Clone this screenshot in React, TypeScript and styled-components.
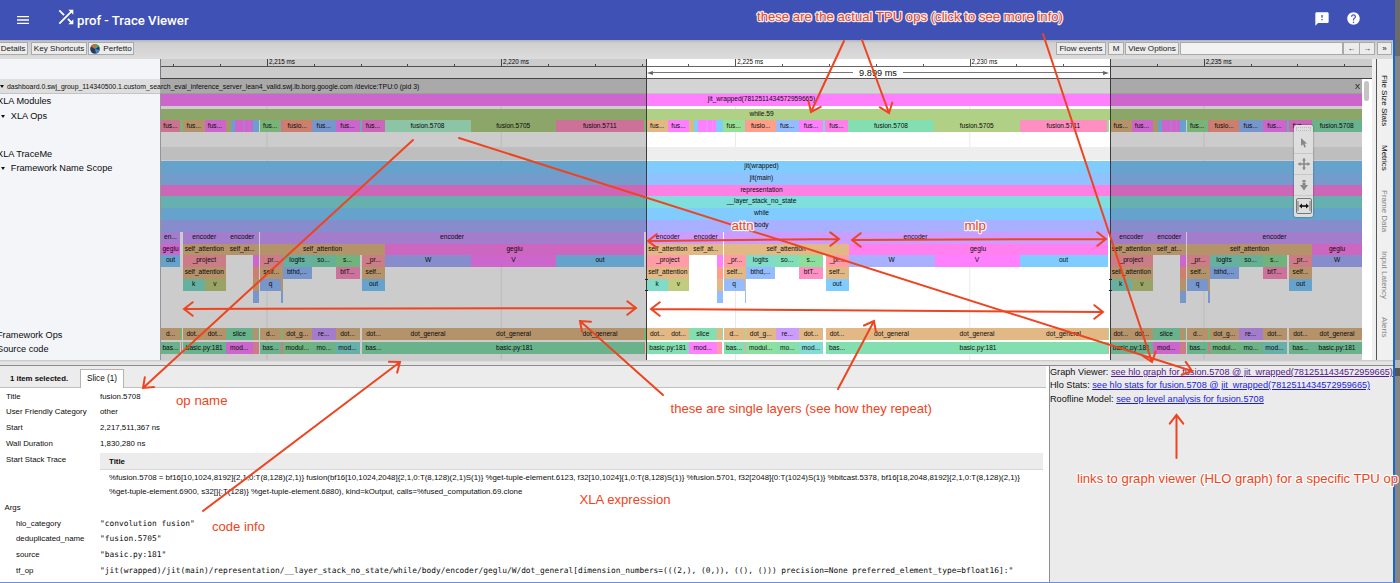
import React from "react";
import styled, { createGlobalStyle } from "styled-components";
import { MdShuffle, MdMenu, MdFeedback, MdHelp } from "react-icons/md";

const Global = createGlobalStyle`
  html, body { margin: 0; padding: 0; overflow: hidden; }
  * { box-sizing: border-box; }
  body { font-family: "Liberation Sans", Arial, sans-serif; color: #0c0c0c; background: #fff; }
`;

const Desktop = styled.div`
  position: relative;
  display: flex;
  width: 1400px;
  height: 583px;
  overflow: hidden;
  background: #777;
`;
const Window = styled.div`
  display: flex;
  flex-direction: column;
  width: 1395px;
  height: 583px;
`;
const Backdrop = styled.div`
  display: flex;
  flex-direction: column;
  flex: 1;
`;
const BackdropBand = styled.div<{ $h: number; $c: string }>`
  height: ${(p) => p.$h}px;
  background: ${(p) => p.$c};
`;

const Header = styled.header`
  display: flex;
  align-items: center;
  flex: none;
  height: 40px;
  padding: 0 34px 0 15px;
  background: #4051b5;
  color: #fff;
`;
const Brand = styled.h1`
  flex: 1;
  display: flex;
  align-items: center;
  margin: 0 0 0 24px;
  font: 500 13.2px Roboto, sans-serif;
  white-space: nowrap;
  svg { margin: -7px 0 0 0; }
  span { padding-top: 1px; }
`;
const HeaderActions = styled.div`
  display: flex;
  gap: 16px;
  margin-top: -3px;
`;

const Body = styled.main`
  display: flex;
  flex-direction: column;
  flex: 1;
  min-height: 0;
  border-right: 2px solid #1767d2;
  border-bottom: 1px solid #6c8fd8;
  background: #fff;
`;

const Toolbar = styled.div`
  display: flex;
  align-items: flex-start;
  flex: none;
  height: 19px;
  padding: 2px 1px 0 0;
  background: linear-gradient(#b4b4b4, #d0d0d0 3px, #dcdcdc);
`;
const ToolButton = styled.button<{ $w: number; $ml?: number }>`
  display: flex;
  align-items: center;
  justify-content: center;
  flex: none;
  gap: 3px;
  width: ${(p) => p.$w}px;
  height: 13px;
  margin: 0 0 0 ${(p) => p.$ml ?? 1}px;
  padding: 0;
  border: 1px solid #aaa;
  background: #ececec;
  color: #181818;
  font: 8.1px "Liberation Sans", Arial, sans-serif;
  white-space: nowrap;
`;
const Spacer = styled.div`
  flex: 1;
`;
const FindBox = styled.div`
  flex: none;
  width: 163px;
  height: 13px;
  margin-left: 1px;
  border: 1px solid #aaa;
  background: #f2f2f2;
`;

const TraceArea = styled.section`
  display: flex;
  flex: none;
  height: 301px;
  background: #f0f0f0;
`;
const Timeline = styled.div`
  position: relative;
  display: flex;
  flex-direction: column;
  width: 1372px;
  background: #fff;
  overflow: hidden;
`;
const Shade = styled.div<{ $x: number; $w: number }>`
  position: absolute;
  top: 0;
  bottom: 0;
  left: ${(p) => p.$x}px;
  width: ${(p) => p.$w}px;
  background: rgba(0, 0, 0, 0.2);
`;
const RangeEdge = styled.div<{ $x: number }>`
  position: absolute;
  top: 0;
  bottom: 0;
  left: ${(p) => p.$x}px;
  width: 1px;
  background: #3c3c3c;
`;
const EdgeGrip = styled.div<{ $x: number }>`
  position: absolute;
  top: 220px;
  left: ${(p) => p.$x}px;
  width: 3px;
  height: 12px;
  border: solid #222;
  border-width: 1px 0;
`;

const RulerRow = styled.div`
  display: flex;
  flex: none;
  height: 20px;
`;
const LabelColumn = styled.div`
  flex: none;
  width: 160px;
  background: #f3f5f9;
`;
const Ruler = styled.div`
  display: flex;
  flex-direction: column;
  flex: 1;
  overflow: hidden;
  border-left: 1px solid #999;
  border-bottom: 1px solid #555;
`;
const TickStrip = styled.div`
  display: flex;
  align-items: flex-end;
  flex: none;
  height: 8px;
  padding-left: 12.2px;
  border-bottom: 1px solid #666;
`;
const Tick = styled.div<{ $major?: boolean }>`
  flex: none;
  width: 46.85px;
  height: ${(p) => (p.$major ? 7 : 2)}px;
  padding-left: 1px;
  border-left: 1px solid #555;
  font-size: 6.3px;
  line-height: 6px;
  white-space: nowrap;
`;
const RangeStrip = styled.div`
  display: flex;
  align-items: center;
  flex: 1;
  width: 464px;
  margin-left: 485px;
  font-size: 9.2px;
`;
const RangeLine = styled.div<{ $end?: boolean }>`
  display: flex;
  align-items: center;
  flex-direction: ${(p) => (p.$end ? "row-reverse" : "row")};
  flex: 1;
  margin: ${(p) => (p.$end ? "0 1px 0 6px" : "0 6px 0 1px")};
  &::before {
    content: "";
    border: solid transparent;
    border-width: 2px 6px 2px 6px;
    border-left: ${(p) => (p.$end ? "6px solid #666" : "0")};
    border-right: ${(p) => (p.$end ? "0" : "6px solid #666")};
  }
  &::after {
    content: "";
    flex: 1;
    height: 1px;
    background: #777;
  }
`;

const ProcessBar = styled.div`
  display: flex;
  align-items: center;
  justify-content: space-between;
  flex: none;
  width: 1362px;
  height: 15px;
  padding: 0 2px 0 0;
  background: linear-gradient(90deg, #dedede 160px, #d4d4d4 160px);
  border-bottom: 1px solid #c4c4c4;
  font-size: 6.88px;
  white-space: nowrap;
`;
const ProcessName = styled.span`
  display: flex;
  align-items: center;
  gap: 3px;
`;
const Caret = styled.i`
  display: inline-block;
  border: solid transparent;
  border-width: 3px 2.5px 0 2.5px;
  border-top-color: #111;
`;
const CloseMark = styled.span`
  font-size: 8px;
`;

const Group = styled.div<{ $h: number }>`
  display: flex;
  flex: none;
  width: 1362px;
  height: ${(p) => p.$h}px;
`;
const GroupLabel = styled.div<{ $nested?: boolean }>`
  display: flex;
  align-items: flex-start;
  gap: 5.8px;
  flex: none;
  width: 160px;
  height: 100%;
  padding: 0 0 0 ${(p) => (p.$nested ? 1 : 0)}px;
  background: #f3f5f9;
  font-size: 9.2px;
  line-height: 14px;
  white-space: nowrap;
  span { margin-left: ${(p) => (p.$nested ? 0 : -3)}px; }
  i { margin-top: 6px; }
`;
const Lanes = styled.div`
  flex: none;
  width: 1202px;
  border-left: 1px solid #bbb;
  overflow: hidden;
  background: linear-gradient(90deg, #eaeaea 1px, #fff 1px) 105.5px 0 / 234.25px 100%;
`;
const LaneRow = styled.div<{ $h?: number; $bg?: string; $lh?: number }>`
  display: flex;
  height: ${(p) => p.$h ?? 11.8}px;
  background: ${(p) => p.$bg ?? "transparent"};
  line-height: ${(p) => p.$lh ?? 10}px;
`;
const Slice = styled.div<{ $gap: number; $w: number; $c: string }>`
  flex: none;
  width: ${(p) => p.$w}px;
  height: 100%;
  margin-left: ${(p) => p.$gap}px;
  background: ${(p) => p.$c};
  color: #0c0c0c;
  font-size: 6.6px;
  text-align: center;
  white-space: nowrap;
  overflow: hidden;
`;

const ScrollTrack = styled.div`
  position: absolute;
  top: 20px;
  right: 0;
  bottom: 0;
  width: 10px;
  padding: 2px 3px 0 2px;
  background: #fff;
`;
const ScrollThumb = styled.div`
  height: 20px;
  border-radius: 3px;
  background: #c4c4c4;
`;

const SideTabs = styled.nav`
  display: flex;
  flex-direction: column;
  align-items: flex-start;
  flex: 1;
  margin-left: 4px;
  padding-top: 16px;
  border-left: 1px solid #555;
  background: #f0f0f0;
`;
const SideTab = styled.div<{ $h: number; $off?: boolean }>`
  flex: none;
  width: 12px;
  height: ${(p) => p.$h}px;
  margin-left: 1px;
  writing-mode: vertical-rl;
  font-size: 8px;
  line-height: 12px;
  color: ${(p) => (p.$off ? "#858585" : "#111")};
  white-space: nowrap;
`;

const Palette = styled.div`
  position: absolute;
  top: 66px;
  left: 1294px;
  display: flex;
  flex-direction: column;
  width: 19px;
  height: 92px;
  border-radius: 2px;
  background: #dedede;
  box-shadow: 0 0 2px rgba(0, 0, 0, 0.5);
`;
const Grip = styled.div`
  height: 4px;
  margin: 2px 2px 2px;
  border: 1px dotted #bbb;
`;
const Tool = styled.div<{ $on?: boolean }>`
  display: flex;
  align-items: center;
  justify-content: center;
  height: ${(p) => (p.$on ? 16 : 21)}px;
  margin: ${(p) => (p.$on ? "2px 1.5px" : "0")};
  border: ${(p) => (p.$on ? "1px solid #777" : "0")};
  border-bottom: 1px solid ${(p) => (p.$on ? "#777" : "#c8c8c8")};
  border-radius: ${(p) => (p.$on ? 2 : 0)}px;
`;

const Divider = styled.div`
  flex: none;
  height: 6px;
  border-bottom: 1px solid #8b8b8b;
  background: linear-gradient(#c4c4c4, #e4e4e4 2px);
`;
const Bottom = styled.section`
  display: flex;
  flex: 1;
  min-height: 0;
`;
const Details = styled.div`
  display: flex;
  flex-direction: column;
  width: 1046px;
  background: #fff;
`;
const DetailsHeader = styled.div`
  display: flex;
  align-items: flex-end;
  flex: none;
  height: 22px;
  border-bottom: 1px solid #c0c0c0;
  background: #ececec;
`;
const Selected = styled.b`
  width: 80px;
  padding-left: 10px;
  font-size: 7.8px;
  line-height: 17px;
  white-space: nowrap;
`;
const DetailTab = styled.div`
  width: 44px;
  height: 19px;
  margin-bottom: -1px;
  border: 1px solid #b4b4b4;
  border-bottom: 0;
  background: #fff;
  font-size: 8.2px;
  line-height: 18px;
  text-align: center;
`;
const Table = styled.div`
  display: flex;
  flex-direction: column;
  padding-top: 0.8px;
  font-size: 7.85px;
`;
const Row = styled.div<{ $h?: number }>`
  display: flex;
  flex: none;
  height: ${(p) => p.$h ?? 15.7}px;
  line-height: 15.7px;
  white-space: nowrap;
`;
const Key = styled.div<{ $indent?: number }>`
  flex: none;
  width: 100px;
  padding-left: ${(p) => p.$indent ?? 6}px;
`;
const Mono = styled.div`
  font: 7.863px/15.7px "DejaVu Sans Mono", monospace;
`;
const Stack = styled.div`
  width: 943px;
`;
const StackHead = styled.div`
  height: 17px;
  margin: 1px 0 1.5px;
  padding-left: 9px;
  border-bottom: 1px solid #d8d8d8;
  background: #ececec;
  font-weight: bold;
  line-height: 17px;
`;
const StackLine = styled.div`
  padding-left: 9px;
  line-height: 13.6px;
  font-size: 7.86px;
`;
const Links = styled.aside`
  flex: 1;
  margin-left: 3px;
  border-left: 1px solid #8f8f8f;
  background: #ebebeb;
  color: #111;
  font-size: 9.16px;
  line-height: 13.3px;
  white-space: nowrap;
  overflow: hidden;
`;
const LinkLine = styled.div``;
const Link = styled.a<{ $visited?: boolean }>`
  color: ${(p) => (p.$visited ? "#551a8b" : "#1a1ae0")};
  text-decoration: underline;
`;

const Overlay = styled.svg`
  position: absolute;
  top: 0;
  left: 0;
`;

type S = [number, number, string, string?];

const C = {
  tan: "#e2b885", pink: "#ff9ca8", mag: "#ff80ff", blue: "#80ccff", peri: "#a8b0ff",
  azure: "#94bcff", purple: "#cc9cff", teal: "#80dcc8", green: "#84dfb0", leaf: "#98e094",
  olive: "#c0cc80", rose: "#ff90c4", salmon: "#ff9f88", lime: "#b0d085", geglu: "#ff80ee",
  picked: "#aff5d0",
};

const PERIOD = 463.5;
const START = 160;
const END = 1362;

/* One transformer layer per period; slice positions are given for the middle layer. */
const repeat = (layer: S[], lead: S[]): S[] => {
  const out: S[] = [...lead];
  for (const n of [-1, 0, 1]) {
    for (const [a, b, c, t] of layer) {
      const x0 = a + n * PERIOD;
      const x1 = Math.min(b + n * PERIOD, END);
      const picked = n === -1 && t === "fusion.5708";
      if (x0 < END) out.push([x0, x1, picked ? C.picked : c, t]);
    }
  }
  return out;
};

const fusion = repeat([
  [646.5, 668, C.tan, "fus..."], [668, 689, C.mag, "fus..."], [689, 694, "#d4bc80"], [694, 698, C.blue],
  [698, 706, C.mag], [706, 708, "#ee90ff"], [708, 712, C.mag], [712, 713, "#ee90ff"], [713, 716, C.mag],
  [716, 722.5, C.blue], [723, 744.5, C.leaf, "fus..."], [744.5, 746, C.rose], [746, 775.5, C.salmon, "fusio..."],
  [775.5, 799, C.azure, "fus..."], [799, 823, C.mag, "fus..."], [823, 825, C.teal], [825, 848, "#ff80ea", "fus..."],
  [848, 934, C.green, "fusion.5708"], [934, 1019.5, C.lime, "fusion.5705"], [1019.5, 1107, "#ff8fc0", "fusion.5711"],
  [1107, 1109, C.leaf],
], [[160, 180, "#ff90b4", "fus..."], [180, 182.5, C.leaf]]);

const encoder = repeat([
  [646.5, 689, C.purple, "encoder"], [689, 722.5, C.purple, "encoder"], [723.5, 1107.5, C.purple, "encoder"],
], [[160, 180, C.purple, "en..."]]);
const block = repeat([
  [646.5, 689, C.tan, "self_attention"], [689, 722.5, C.tan, "self_at..."], [723.5, 848.5, C.tan, "self_attention"],
  [848.5, 1107.5, C.geglu, "geglu"],
], [[160, 180, C.mag, "geglu"]]);
const part = repeat([
  [646.5, 689, C.pink, "_project"], [716.5, 722.5, C.mag], [723.5, 746, C.pink, "_pr..."],
  [746, 775, C.teal, "logits"], [775, 799, "#80deb8", "so..."], [799, 823, "#8ce09c", "s..."],
  [825.5, 848.5, C.pink, "_pr..."], [848.5, 934.5, C.peri, "W"], [934.5, 1019.5, C.mag, "V"], [1019.5, 1107.5, C.blue, "out"],
], [[160, 180, C.blue, "out"]]);
const attention = repeat([
  [646.5, 689, C.tan, "self_attention"], [716.5, 722.5, C.salmon], [723.5, 746, C.tan, "self..."],
  [746, 775, C.azure, "bthd,..."], [799, 823, C.rose, "btT..."], [825.5, 848.5, C.tan, "self..."],
], []);
const weights = repeat([
  [646.5, 668, C.teal, "k"], [668, 689, C.olive, "v"], [716.5, 722.5, C.tan], [723.5, 744.5, C.azure, "q"],
  [744.5, 746, C.tan], [825.5, 848.5, C.blue, "out"],
], []);
const leaf = repeat([[716.5, 722.5, C.azure], [744.5, 746, C.azure]], []);
const ops = repeat([
  [646.5, 668, C.tan, "dot..."], [668, 689, C.tan, "dot..."], [689, 716.5, C.green, "slice"], [716.5, 721.5, C.tan],
  [721.5, 722.5, C.green], [723.5, 744.5, C.tan, "d..."], [744.5, 746, C.leaf], [746, 775.5, C.tan, "dot_g..."],
  [775.5, 799, C.purple, "re..."], [799, 823, C.tan, "dot..."], [825.5, 848.5, C.tan, "dot..."],
  [848.5, 934.5, C.tan, "dot_general"], [934.5, 1019.5, C.tan, "dot_general"], [1019.5, 1107.5, C.tan, "dot_general"],
  [1107.5, 1109, C.leaf],
], [[160, 180, C.tan, "d..."], [180, 182, C.leaf]]);
const source = repeat([
  [646.5, 689, C.green, "basic.py:181"], [689, 716.5, C.mag, "mod..."], [716.5, 722, C.pink],
  [723.5, 744.5, C.green, "bas..."], [744.5, 746, C.pink], [746, 775.5, "#8ce0a0", "modul..."],
  [775.5, 799, "#88dfa8", "mo..."], [799, 823, "#80dcd4", "mod..."], [825.5, 848.5, C.green, "bas..."],
  [848.5, 1107.5, C.green, "basic.py:181"], [1107.5, 1108.5, C.salmon],
], [[160, 180, C.green, "bas..."], [180.5, 182, C.pink]]);

const full = (c: string, t: string): S[] => [[START, END, c, t]];

const Lane = ({ slices, h, lh }: { slices: S[]; h?: number; lh?: number }) => {
  let cursor = START + 1;
  return (
    <LaneRow $h={h} $lh={lh}>
      {slices.map(([a, b, c, t], i) => {
        const from = Math.max(a, START + 1);
        const gap = from - cursor;
        cursor = b;
        return <Slice key={i} $gap={gap} $w={b - from} $c={c}>{t}</Slice>;
      })}
    </LaneRow>
  );
};

const details: [string, string][] = [
  ["Title", "fusion.5708"], ["User Friendly Category", "other"], ["Start", "2,217,511,367 ns"], ["Wall Duration", "1,830,280 ns"],
];
const args: [string, string][] = [
  ["hlo_category", '"convolution fusion"'],
  ["deduplicated_name", '"fusion.5705"'],
  ["source", '"basic.py:181"'],
  ["tf_op", '"jit(wrapped)/jit(main)/representation/__layer_stack_no_state/while/body/encoder/geglu/W/dot_general[dimension_numbers=(((2,), (0,)), ((), ())) precision=None preferred_element_type=bfloat16]:"'],
];

const RED = "#ee4420";

type Arrow = { p: [number, number, number, number]; both?: boolean };
const arrows: Arrow[] = [
  { p: [844, 41, 811, 112] }, { p: [862, 40, 889, 113] }, { p: [1043, 34, 1152, 362] },
  { p: [413, 140, 143, 388] }, { p: [459, 138, 1192, 371] }, { p: [203, 511, 400, 362] },
  { p: [663, 395, 580, 321] }, { p: [838, 389, 874, 321] },
  { p: [184, 309, 636, 308], both: true }, { p: [651, 309, 1103, 312], both: true },
  { p: [648, 241, 839, 239], both: true }, { p: [852, 240, 1106, 239], both: true },
  { p: [1176.5, 458, 1176.5, 415] },
];
const head = (x: number, y: number, angle: number) => {
  const arm = (d: number) => `${x - 11 * Math.cos(angle + d)} ${y - 11 * Math.sin(angle + d)}`;
  return `M${arm(0.66)} L${x} ${y} L${arm(-0.66)}`;
};
const arrowPath = ({ p: [x1, y1, x2, y2], both }: Arrow) => {
  const a = Math.atan2(y2 - y1, x2 - x1);
  return `M${x1} ${y1} L${x2} ${y2} ${head(x2, y2, a)} ${both ? head(x1, y1, a + Math.PI) : ""}`;
};

const notes: [string, number, number, number][] = [
  ["these are the actual TPU ops (click to see more info)", 757, 20.5, 306],
  ["op name", 176, 405, 51.5],
  ["code info", 212, 531, 53],
  ["XLA expression", 579.5, 504, 91],
  ["these are single layers (see how they repeat)", 670.5, 413, 261.5],
  ["links to graph viewer (HLO graph) for a specific TPU op", 1077, 482.5, 321],
  ["attn", 731.5, 229.5, 22],
  ["mlp", 964.5, 230, 21.5],
];

export default function App() {
  return (
    <>
      <Global />
      <Desktop>
        <Window>
          <Header>
            <MdMenu size={16} />
            <Brand><MdShuffle size={22} /><span>prof - Trace Viewer</span></Brand>
            <HeaderActions><MdFeedback size={16} /><MdHelp size={15} /></HeaderActions>
          </Header>
          <Body>
            <Toolbar>
              <ToolButton $w={30} $ml={-2}>Details</ToolButton>
              <ToolButton $w={56} $ml={3}>Key Shortcuts</ToolButton>
              <ToolButton $w={46}>
                <svg width="10" height="10" viewBox="0 0 10 10">
                  <circle cx="5" cy="5" r="4.8" fill="#1d3f66" />
                  <path d="M5 5 L1 2.4 A4.8 4.8 0 0 1 5 .2 Z" fill="#e0662c" />
                  <path d="M5 5 L5 .2 A4.8 4.8 0 0 1 9 2.4 Z" fill="#59a84c" />
                  <path d="M5 5 L9.6 6 A4.8 4.8 0 0 1 6 9.6 Z" fill="#3f8fd0" />
                </svg>
                Perfetto
              </ToolButton>
              <Spacer />
              <ToolButton $w={50}>Flow events</ToolButton>
              <ToolButton $w={16} $ml={2}>M</ToolButton>
              <ToolButton $w={54} $ml={1}>View Options</ToolButton>
              <FindBox />
              <ToolButton $w={17} $ml={0}>←</ToolButton>
              <ToolButton $w={16} $ml={-1}>→</ToolButton>
              <ToolButton $w={15} $ml={2}>»</ToolButton>
            </Toolbar>
            <TraceArea>
              <Timeline>
                <RulerRow>
                  <LabelColumn />
                  <Ruler>
                    <TickStrip>
                      {Array.from({ length: 26 }, (_, i) => (
                        <Tick key={i} $major={i % 5 === 2}>
                          {i % 5 === 2 ? `2,${215 + (i - 2)} ms` : null}
                        </Tick>
                      ))}
                    </TickStrip>
                    <RangeStrip><RangeLine />9.899 ms<RangeLine $end /></RangeStrip>
                  </Ruler>
                </RulerRow>
                <ProcessBar>
                  <ProcessName><Caret />dashboard.0.swj_group_114340500.1.custom_search_eval_inference_server_lean4_valid.swj.lb.borg.google.com /device:TPU:0 (pid 3)</ProcessName>
                  <CloseMark>X</CloseMark>
                </ProcessBar>
                <Group $h={14.6}>
                  <GroupLabel><span>XLA Modules</span></GroupLabel>
                  <Lanes><Lane h={12} slices={full(C.mag, "jit_wrapped(7812511434572959665)")} /></Lanes>
                </Group>
                <Group $h={38.4}>
                  <GroupLabel $nested><Caret /><span>XLA Ops</span></GroupLabel>
                  <Lanes><Lane slices={full(C.lime, "while.59")} /><Lane slices={fusion} lh={11} /></Lanes>
                </Group>
                <Group $h={14}>
                  <GroupLabel><span>XLA TraceMe</span></GroupLabel>
                  <Lanes><LaneRow $h={13} $bg="#eeeeee" /></Lanes>
                </Group>
                <Group $h={167.2}>
                  <GroupLabel $nested><Caret /><span>Framework Name Scope</span></GroupLabel>
                  <Lanes>
                    <Lane slices={full(C.blue, "jit(wrapped)")} />
                    <Lane slices={full("#90c2ff", "jit(main)")} />
                    <Lane slices={full("#ff80e5", "representation")} />
                    <Lane slices={full("#80dedc", "__layer_stack_no_state")} />
                    <Lane slices={full(C.blue, "while")} />
                    <Lane slices={full(C.peri, "body")} />
                    <Lane slices={encoder} />
                    <Lane slices={block} />
                    <Lane slices={part} />
                    <Lane slices={attention} />
                    <Lane slices={weights} />
                    <Lane slices={leaf} />
                  </Lanes>
                </Group>
                <Group $h={14}>
                  <GroupLabel><span>Framework Ops</span></GroupLabel>
                  <Lanes><Lane slices={ops} h={12} lh={11} /></Lanes>
                </Group>
                <Group $h={18}>
                  <GroupLabel><span>Source code</span></GroupLabel>
                  <Lanes><Lane slices={source} h={12} lh={12} /></Lanes>
                </Group>
                <Shade $x={160} $w={486} />
                <Shade $x={1110} $w={262} />
                <ScrollTrack><ScrollThumb /></ScrollTrack>
                <RangeEdge $x={645.5} />
                <RangeEdge $x={1109.5} />
                <EdgeGrip $x={645} />
                <EdgeGrip $x={1109} />
                <Palette>
                  <Grip />
                  <Tool><svg width="10" height="12" viewBox="0 0 10 12"><path d="M2 1 L2 9 L4 7.3 L5.4 10.6 L7 9.9 L5.6 6.8 L8 6.6 Z" fill="#888" /></svg></Tool>
                  <Tool><svg width="12" height="12" viewBox="0 0 12 12"><path d="M6 .5 V11.5 M.5 6 H11.5" stroke="#888" strokeWidth="1.6" /><path d="M6 0 L8 2.5 H4Z M6 12 L8 9.5 H4Z M0 6 L2.5 4 V8Z M12 6 L9.5 4 V8Z" fill="#888" /></svg></Tool>
                  <Tool><svg width="10" height="12" viewBox="0 0 10 12"><path d="M3.5 1 H6.5 V3 H3.5Z M3.5 3.5 H6.5 V6 H9 L5 11.5 L1 6 H3.5Z" fill="#888" /></svg></Tool>
                  <Tool $on><svg width="14" height="12" viewBox="0 0 14 12"><path d="M1 1 V11 M13 1 V11" stroke="#777" strokeWidth="1" /><path d="M4 6 H10" stroke="#111" strokeWidth="1.6" /><path d="M2 6 L5 3.4 V8.6Z M12 6 L9 3.4 V8.6Z" fill="#111" /></svg></Tool>
                </Palette>
              </Timeline>
              <SideTabs>
                <SideTab $h={70}>File Size Stats</SideTab>
                <SideTab $h={45}>Metrics</SideTab>
                <SideTab $h={61} $off>Frame Data</SideTab>
                <SideTab $h={66} $off>Input Latency</SideTab>
                <SideTab $h={30} $off>Alerts</SideTab>
              </SideTabs>
            </TraceArea>
            <Divider />
            <Bottom>
              <Details>
                <DetailsHeader>
                  <Selected>1 item selected.</Selected>
                  <DetailTab>Slice (1)</DetailTab>
                </DetailsHeader>
                <Table>
                  {details.map(([k, v]) => (
                    <Row key={k}><Key>{k}</Key>{v}</Row>
                  ))}
                  <Row $h={48.5}>
                    <Key>Start Stack Trace</Key>
                    <Stack>
                      <StackHead>Title</StackHead>
                      <StackLine>%fusion.5708 = bf16[10,1024,8192]{"{"}2,1,0:T(8,128)(2,1){"}"} fusion(bf16[10,1024,2048]{"{"}2,1,0:T(8,128)(2,1)S(1){"}"} %get-tuple-element.6123, f32[10,1024]{"{"}1,0:T(8,128)S(1){"}"} %fusion.5701, f32[2048]{"{"}0:T(1024)S(1){"}"} %bitcast.5378, bf16[18,2048,8192]{"{"}2,1,0:T(8,128)(2,1){"}"}</StackLine>
                      <StackLine>%get-tuple-element.6900, s32[]{"{"}:T(128){"}"} %get-tuple-element.6880), kind=kOutput, calls=%fused_computation.69.clone</StackLine>
                    </Stack>
                  </Row>
                  <Row><Key $indent={4.5}>Args</Key></Row>
                  {args.map(([k, v]) => (
                    <Row key={k}><Key $indent={16}>{k}</Key><Mono>{v}</Mono></Row>
                  ))}
                </Table>
              </Details>
              <Links>
                <LinkLine>Graph Viewer: <Link $visited>see hlo graph for fusion.5708 @ jit_wrapped(7812511434572959665)</Link></LinkLine>
                <LinkLine>Hlo Stats: <Link>see hlo stats for fusion.5708 @ jit_wrapped(7812511434572959665)</Link></LinkLine>
                <LinkLine>Roofline Model: <Link>see op level analysis for fusion.5708</Link></LinkLine>
              </Links>
            </Bottom>
          </Body>
        </Window>
        <Backdrop>
          <BackdropBand $h={56} $c="#6b6b6b" />
          <BackdropBand $h={304} $c="#858585" />
          <BackdropBand $h={8} $c="#b4b4b4" />
          <BackdropBand $h={8} $c="#555" />
          <BackdropBand $h={207} $c="#858585" />
        </Backdrop>
        <Overlay width="1400" height="583" viewBox="0 0 1400 583">
          {arrows.map((a, i) => (
            <path key={i} d={arrowPath(a)} fill="none" stroke={RED} strokeWidth="2" strokeLinecap="round" />
          ))}
          {notes.map(([t, x, y, w]) => (
            <text key={t} x={x} y={y} textLength={w} lengthAdjust="spacingAndGlyphs" fill={RED} stroke="#fff" strokeWidth="2.4" strokeOpacity="0.9"
              strokeLinejoin="round" paintOrder="stroke" fontSize="13.2" fontFamily='"Liberation Sans", Arial, sans-serif'>{t}</text>
          ))}
        </Overlay>
      </Desktop>
    </>
  );
}
